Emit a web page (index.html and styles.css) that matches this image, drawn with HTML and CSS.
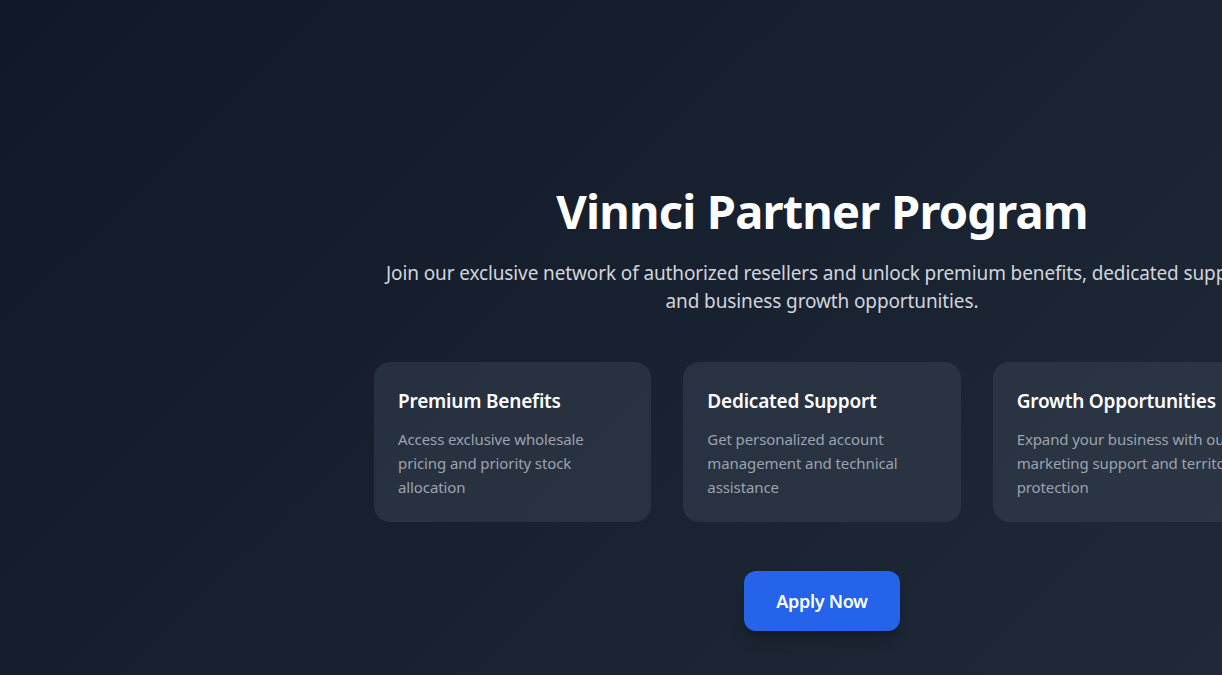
FILE: index.html
```html
<!DOCTYPE html>
<html lang="en">
<head>
<meta charset="utf-8">
<title>Vinnci Partner Program</title>
<link rel="stylesheet" href="styles.css">
</head>
<body>
<main class="page">
  <section class="hero">
    <h1 class="title">Vinnci Partner Program</h1>
    <p class="subtitle">Join our exclusive network of authorized resellers and unlock premium benefits, dedicated support, and business growth opportunities.</p>
    <div class="cards">
      <div class="card">
        <h3 class="card-title">Premium Benefits</h3>
        <p class="card-text">Access exclusive wholesale pricing and priority stock allocation</p>
      </div>
      <div class="card">
        <h3 class="card-title">Dedicated Support</h3>
        <p class="card-text">Get personalized account management and technical assistance</p>
      </div>
      <div class="card">
        <h3 class="card-title">Growth Opportunities</h3>
        <p class="card-text">Expand your business with our marketing support and territory protection</p>
      </div>
    </div>
    <button class="apply">Apply Now</button>
  </section>
</main>
</body>
</html>
```

FILE: styles.css
```css
html, body {
  margin: 0;
  padding: 0;
  overflow: hidden;
}
body {
  font-family: "Noto Sans", "Open Sans", sans-serif;
  background: linear-gradient(135deg, #111827 0%, #1f2937 100%);
  min-height: 100vh;
  color: #fff;
}
.page {
  min-height: 100vh;
  padding-top: 185px;
  box-sizing: border-box;
}
.hero {
  width: 896px;
  margin-left: 374px;
  text-align: center;
  display: flex;
  flex-direction: column;
  align-items: center;
}
.title {
  margin: 0 0 22px;
  font-size: 47px;
  line-height: 52px;
  font-weight: 700;
  letter-spacing: -0.8px;
  color: #fff;
}
.subtitle {
  margin: 0 0 47px;
  font-size: 19px;
  line-height: 28px;
  color: #d1d5db;
  letter-spacing: -0.12px;
  width: 880px;
}
.cards {
  display: grid;
  grid-template-columns: repeat(3, 1fr);
  gap: 32px;
  width: 100%;
  text-align: left;
}
.card {
  background: rgba(55, 65, 81, 0.5);
  border-radius: 16px;
  padding: 25px 24px 23px;
}
.card-title {
  margin: 0 0 12px;
  font-size: 19px;
  line-height: 28px;
  font-weight: 600;
  letter-spacing: -0.2px;
  color: #fff;
}
.card-text {
  margin: 0;
  font-size: 15px;
  line-height: 24px;
  color: #9ca3af;
  letter-spacing: -0.1px;
}
.apply {
  margin-top: 49px;
  border: 0;
  background: #2563eb;
  color: #fff;
  font-family: inherit;
  font-size: 18px;
  line-height: 28px;
  font-weight: 600;
  letter-spacing: -0.3px;
  padding: 16px 32px;
  border-radius: 12px;
  box-shadow: 0 10px 15px -3px rgba(0,0,0,0.25), 0 4px 6px -4px rgba(0,0,0,0.2);
  cursor: pointer;
}
```
